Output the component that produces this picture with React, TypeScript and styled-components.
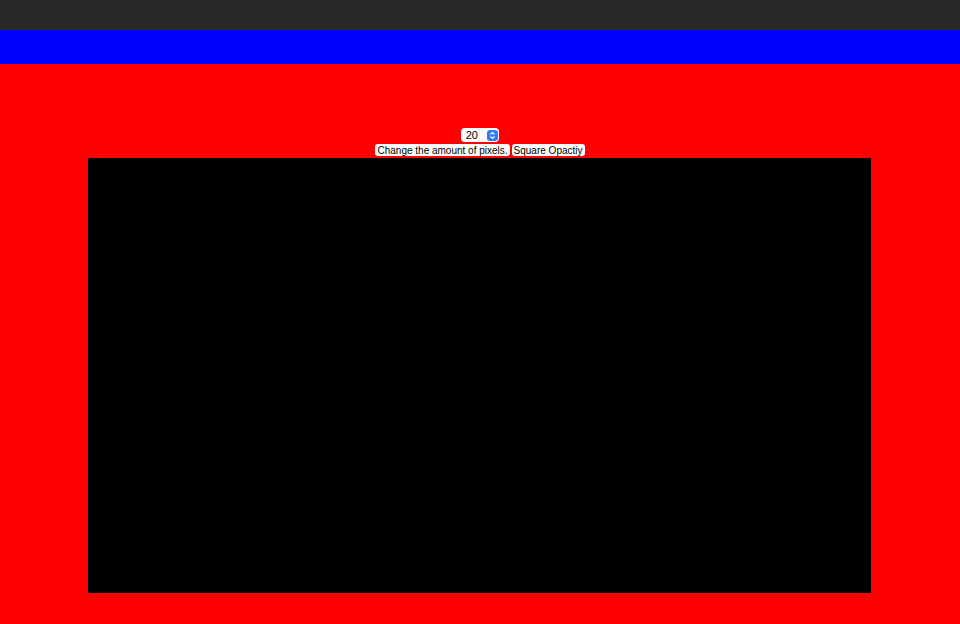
import React from "react";
import styled, { createGlobalStyle } from "styled-components";

const Global = createGlobalStyle`
  html, body { margin: 0; padding: 0; background: #ff0000; }
  body { font-family: "Liberation Sans", Arial, sans-serif; }
`;

const Page = styled.div`
  width: 960px;
  height: 624px;
  display: flex;
  flex-direction: column;
  background: #ff0000;
  overflow: hidden;
`;

const TopBar = styled.div`
  height: 30px;
  background: #292929;
  flex-shrink: 0;
`;

const BlueBar = styled.div`
  height: 34px;
  background: #0000ff;
  flex-shrink: 0;
`;

const Main = styled.main`
  flex: 1;
  display: flex;
  flex-direction: column;
  align-items: center;
  padding-top: 64px;
`;

const SelectBox = styled.div`
  width: 38px;
  height: 14px;
  background: #fff;
  border-radius: 4px;
  display: flex;
  align-items: center;
  justify-content: flex-end;
  padding-right: 1px;
  box-sizing: border-box;
  gap: 9px;
`;

const SelectValue = styled.span`
  font-size: 11px;
  color: #000;
  line-height: 14px;
`;

const Stepper = styled.span`
  width: 11px;
  height: 11px;
  border-radius: 3px;
  background: #2f7cf6;
  display: flex;
  align-items: center;
  justify-content: center;
`;

const Labels = styled.div`
  display: flex;
  gap: 2px;
  margin-top: 2px;
`;

const Label = styled.span`
  background: #fff;
  color: #000;
  font-size: 10px;
  line-height: 13px;
  height: 12px;
  padding: 0 2px;
  border-radius: 3px;
  white-space: nowrap;
`;

const Canvas = styled.div`
  width: 783px;
  height: 435px;
  background: #000;
  margin-top: 2px;
  margin-right: 1px;
`;

export default function App() {
  return (
    <Page>
      <Global />
      <TopBar />
      <BlueBar />
      <Main>
        <SelectBox>
          <SelectValue>20</SelectValue>
          <Stepper>
            <svg width="7" height="9" viewBox="0 0 7 9">
              <path d="M1.5 3.5 L3.5 1.5 L5.5 3.5 M1.5 5.5 L3.5 7.5 L5.5 5.5" stroke="#fff" strokeWidth="1.1" fill="none" />
            </svg>
          </Stepper>
        </SelectBox>
        <Labels>
          <Label>Change the amount of pixels.</Label>
          <Label>Square Opactiy</Label>
        </Labels>
        <Canvas />
      </Main>
    </Page>
  );
}
